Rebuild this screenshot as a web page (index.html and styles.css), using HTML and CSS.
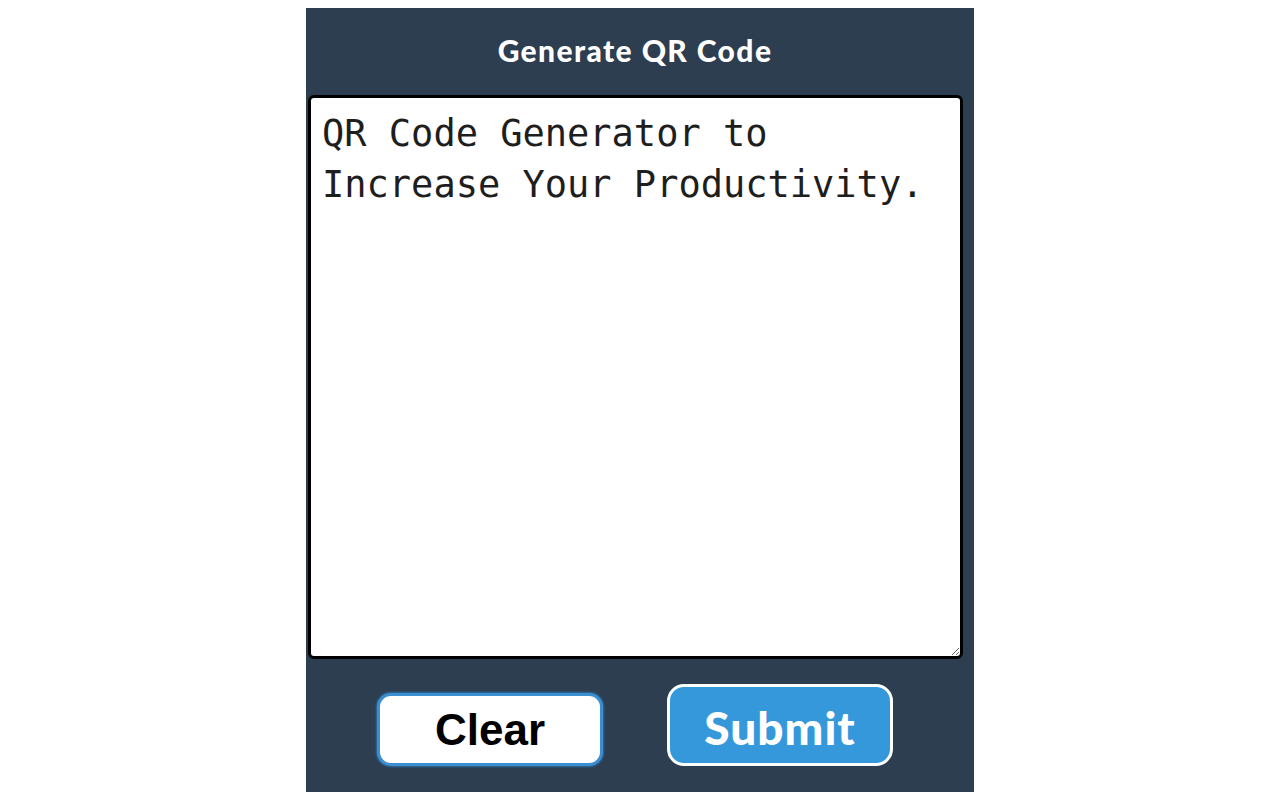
FILE: index.html
```html
<!DOCTYPE html>
<html lang="en">
<head>
<meta charset="utf-8">
<title>Generate QR Code</title>
<link rel="stylesheet" href="styles.css">
</head>
<body>
<main class="panel">
  <h1 class="title">Generate QR Code</h1>
  <textarea class="input">QR Code Generator to
Increase Your Productivity.</textarea>
  <div class="actions">
    <button class="btn btn-clear" type="button">Clear</button>
    <button class="btn btn-submit" type="button">Submit</button>
  </div>
</main>
</body>
</html>
```

FILE: styles.css
```css
html, body {
  margin: 0;
  padding: 0;
  background: #ffffff;
}

.panel {
  width: 668px;
  height: 784px;
  margin: 8px auto 0;
  background: #2c3e50;
  display: flex;
  flex-direction: column;
  box-sizing: border-box;
  padding-bottom: 26px;
}

.title {
  margin: 0;
  height: 87px;
  display: flex;
  align-items: center;
  justify-content: center;
  font-family: Lato, "Open Sans", sans-serif;
  font-weight: 900;
  font-size: 30px;
  letter-spacing: 1.4px;
  color: #ffffff;
  padding: 0 10px 4px 0;
  box-sizing: border-box;
}

.input {
  display: block;
  margin: 0 0 0 2px;
  width: 655px;
  height: 564px;
  box-sizing: border-box;
  border: 3px solid #000000;
  border-radius: 6px;
  background: #ffffff;
  padding: 10px 11px;
  font-family: "DejaVu Sans Mono", "Liberation Mono", monospace;
  font-size: 37px;
  line-height: 51px;
  color: #1e1e1e;
  resize: vertical;
  outline: none;
}

.actions {
  flex: 1;
  display: flex;
  align-items: flex-end;
  justify-content: center;
  gap: 64px;
  padding-right: 10px;
}

.btn {
  width: 226px;
  box-sizing: border-box;
  font-weight: 700;
  cursor: pointer;
  padding: 0;
}

.btn-clear {
  height: 73px;
  background: #ffffff;
  border: 3px solid #3b8fd0;
  border-radius: 14px;
  box-shadow: 0 0 2px 1px #2f6fa3;
  color: #000000;
  font-family: "Liberation Sans", Arial, sans-serif;
  font-size: 44px;
  letter-spacing: 0;
  padding-top: 0;
}

.btn-submit {
  height: 82px;
  background: #3498db;
  border: 3px solid #ffffff;
  border-radius: 17px;
  color: #ffffff;
  font-family: Lato, "Open Sans", sans-serif;
  font-weight: 900;
  font-size: 46px;
  letter-spacing: 1px;
  padding-top: 4px;
}
```
